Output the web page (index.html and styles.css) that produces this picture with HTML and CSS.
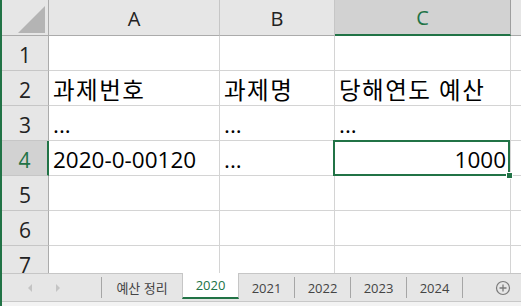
FILE: index.html
```html
<!DOCTYPE html>
<html lang="ko">
<head>
    <meta charset="UTF-8">
    <title>예산 정리 - 2020</title>
    <link rel="stylesheet" href="styles.css">
</head>
<body>
    <div class="app">
        <div class="sheet">
            <div class="corner"><span class="corner-tri"></span></div>
            <div class="col-head">A</div>
            <div class="col-head">B</div>
            <div class="col-head selected">C</div>
            <div class="col-head rest"></div>

            <div class="row-head">1</div>
            <div class="cell"></div>
            <div class="cell"></div>
            <div class="cell"></div>
            <div class="cell rest"></div>

            <div class="row-head">2</div>
            <div class="cell ko">과제번호</div>
            <div class="cell ko">과제명</div>
            <div class="cell ko">당해연도 예산</div>
            <div class="cell rest"></div>

            <div class="row-head">3</div>
            <div class="cell">...</div>
            <div class="cell">...</div>
            <div class="cell">...</div>
            <div class="cell rest"></div>

            <div class="row-head selected">4</div>
            <div class="cell">2020-0-00120</div>
            <div class="cell">...</div>
            <div class="cell number active">1000</div>
            <div class="cell rest"></div>

            <div class="row-head">5</div>
            <div class="cell"></div>
            <div class="cell"></div>
            <div class="cell"></div>
            <div class="cell rest"></div>

            <div class="row-head">6</div>
            <div class="cell"></div>
            <div class="cell"></div>
            <div class="cell"></div>
            <div class="cell rest"></div>

            <div class="row-head">7</div>
            <div class="cell"></div>
            <div class="cell"></div>
            <div class="cell"></div>
            <div class="cell rest"></div>
        </div>

        <div class="tab-bar">
            <div class="tab-nav">
                <svg width="8" height="10" viewBox="0 0 8 10"><path d="M6 1 L2 5 L6 9 Z" fill="#c4c4c4"/></svg>
                <svg width="8" height="10" viewBox="0 0 8 10"><path d="M2 1 L6 5 L2 9 Z" fill="#c4c4c4"/></svg>
            </div>
            <div class="tab first">예산 정리</div>
            <div class="tab active">2020</div>
            <div class="tab">2021</div>
            <div class="tab">2022</div>
            <div class="tab">2023</div>
            <div class="tab">2024</div>
            <div class="add-sheet">
                <svg width="16" height="16" viewBox="0 0 16 16">
                    <circle cx="8" cy="8" r="6.5" fill="none" stroke="#7a7a7a" stroke-width="1.2"/>
                    <path d="M8 4.5 V11.5 M4.5 8 H11.5" stroke="#7a7a7a" stroke-width="1.3"/>
                </svg>
            </div>
        </div>
        <div class="status-strip"></div>
    </div>
</body>
</html>
```

FILE: styles.css
```css
body {
    margin: 0;
    font-family: 'Open Sans', 'Noto Sans CJK KR', sans-serif;
    color: #000;
    background-color: #fff;
}
.app {
    height: 306px;
    display: flex;
    flex-direction: column;
    border-left: 2px solid #217346;
    overflow: hidden;
}
.sheet {
    flex: 1;
    display: grid;
    grid-template-columns: 47px 171px 115px 176px 1fr;
    grid-template-rows: 36px repeat(7, 35px);
    overflow: hidden;
}
.sheet > div {
    box-sizing: border-box;
    border-right: 1px solid #d4d4d4;
    border-bottom: 1px solid #d4d4d4;
}
.corner {
    background-color: #e6e6e6;
    border-right-color: #ababab !important;
    border-bottom-color: #ababab !important;
    position: relative;
}
.corner-tri {
    position: absolute;
    right: 3px;
    bottom: 2px;
    width: 0;
    height: 0;
    border-left: 27px solid transparent;
    border-bottom: 27px solid #b4b4b4;
}
.col-head {
    background-color: #e6e6e6;
    border-right-color: #c6c6c6 !important;
    border-bottom-color: #ababab !important;
    display: flex;
    align-items: center;
    justify-content: center;
    font-size: 20px;
    color: #222;
    padding-top: 1px;
}
.col-head.selected {
    background-color: #d2d2d2;
    color: #217346;
    border-right-color: #9e9e9e !important;
    border-bottom: 2px solid #217346 !important;
}
.col-head.rest {
    border-right: none;
}
.row-head {
    background-color: #e6e6e6;
    border-right-color: #ababab !important;
    border-bottom-color: #c6c6c6 !important;
    display: flex;
    align-items: center;
    justify-content: center;
    font-size: 21px;
    color: #222;
    padding-top: 3px;
}
.row-head.selected {
    background-color: #d2d2d2;
    color: #217346;
    border-right: 2px solid #217346 !important;
}
.cell {
    display: flex;
    align-items: flex-end;
    padding: 0 4px 2px;
    font-size: 22.5px;
    line-height: 1.2;
    white-space: nowrap;
}
.cell.ko {
    font-size: 23.5px;
    letter-spacing: 1.5px;
    padding-bottom: 1px;
}
.cell.rest {
    border-right: none;
}
.cell.number {
    justify-content: flex-end;
}
.cell.active {
    position: relative;
    z-index: 2;
}
.cell.active::after {
    content: '';
    position: absolute;
    left: -2px;
    right: 0;
    top: -1px;
    bottom: -1px;
    border: 2px solid #217346;
}
.cell.active::before {
    content: '';
    position: absolute;
    right: -3px;
    bottom: -4px;
    width: 5px;
    height: 5px;
    background-color: #217346;
    border: 1px solid #fff;
    z-index: 3;
}
.tab-bar {
    height: 28px;
    box-sizing: border-box;
    border-top: 1px solid #c6c6c6;
    background-color: #e6e6e6;
    display: flex;
    align-items: stretch;
    font-size: 13px;
    color: #444;
}
.tab-nav {
    width: 100px;
    box-sizing: border-box;
    display: flex;
    align-items: center;
    gap: 20px;
    padding-left: 24px;
    margin: 3px 0 3px;
    border-right: 1px solid #a6a6a6;
}
.tab {
    width: 56px;
    box-sizing: border-box;
    margin: 3px 0 3px;
    border-right: 1px solid #a6a6a6;
    display: flex;
    align-items: center;
    justify-content: center;
}
.tab.first {
    width: 80px;
    border-right: none;
}
.tab.active {
    width: 57px;
    margin: -1px 0 2px;
    background-color: #fff;
    border-left: 1px solid #c6c6c6;
    border-right: 1px solid #c6c6c6;
    border-bottom: 2px solid #217346;
    color: #217346;
}
.tab:last-of-type {
    width: 55px;
}
.add-sheet {
    margin-left: auto;
    margin-right: 10px;
    display: flex;
    align-items: center;
}
.add-sheet svg {
    display: block;
}
.status-strip {
    height: 5px;
    box-sizing: border-box;
    border-top: 1px solid #c8c8c8;
    background-color: #f3f3f3;
}
```
